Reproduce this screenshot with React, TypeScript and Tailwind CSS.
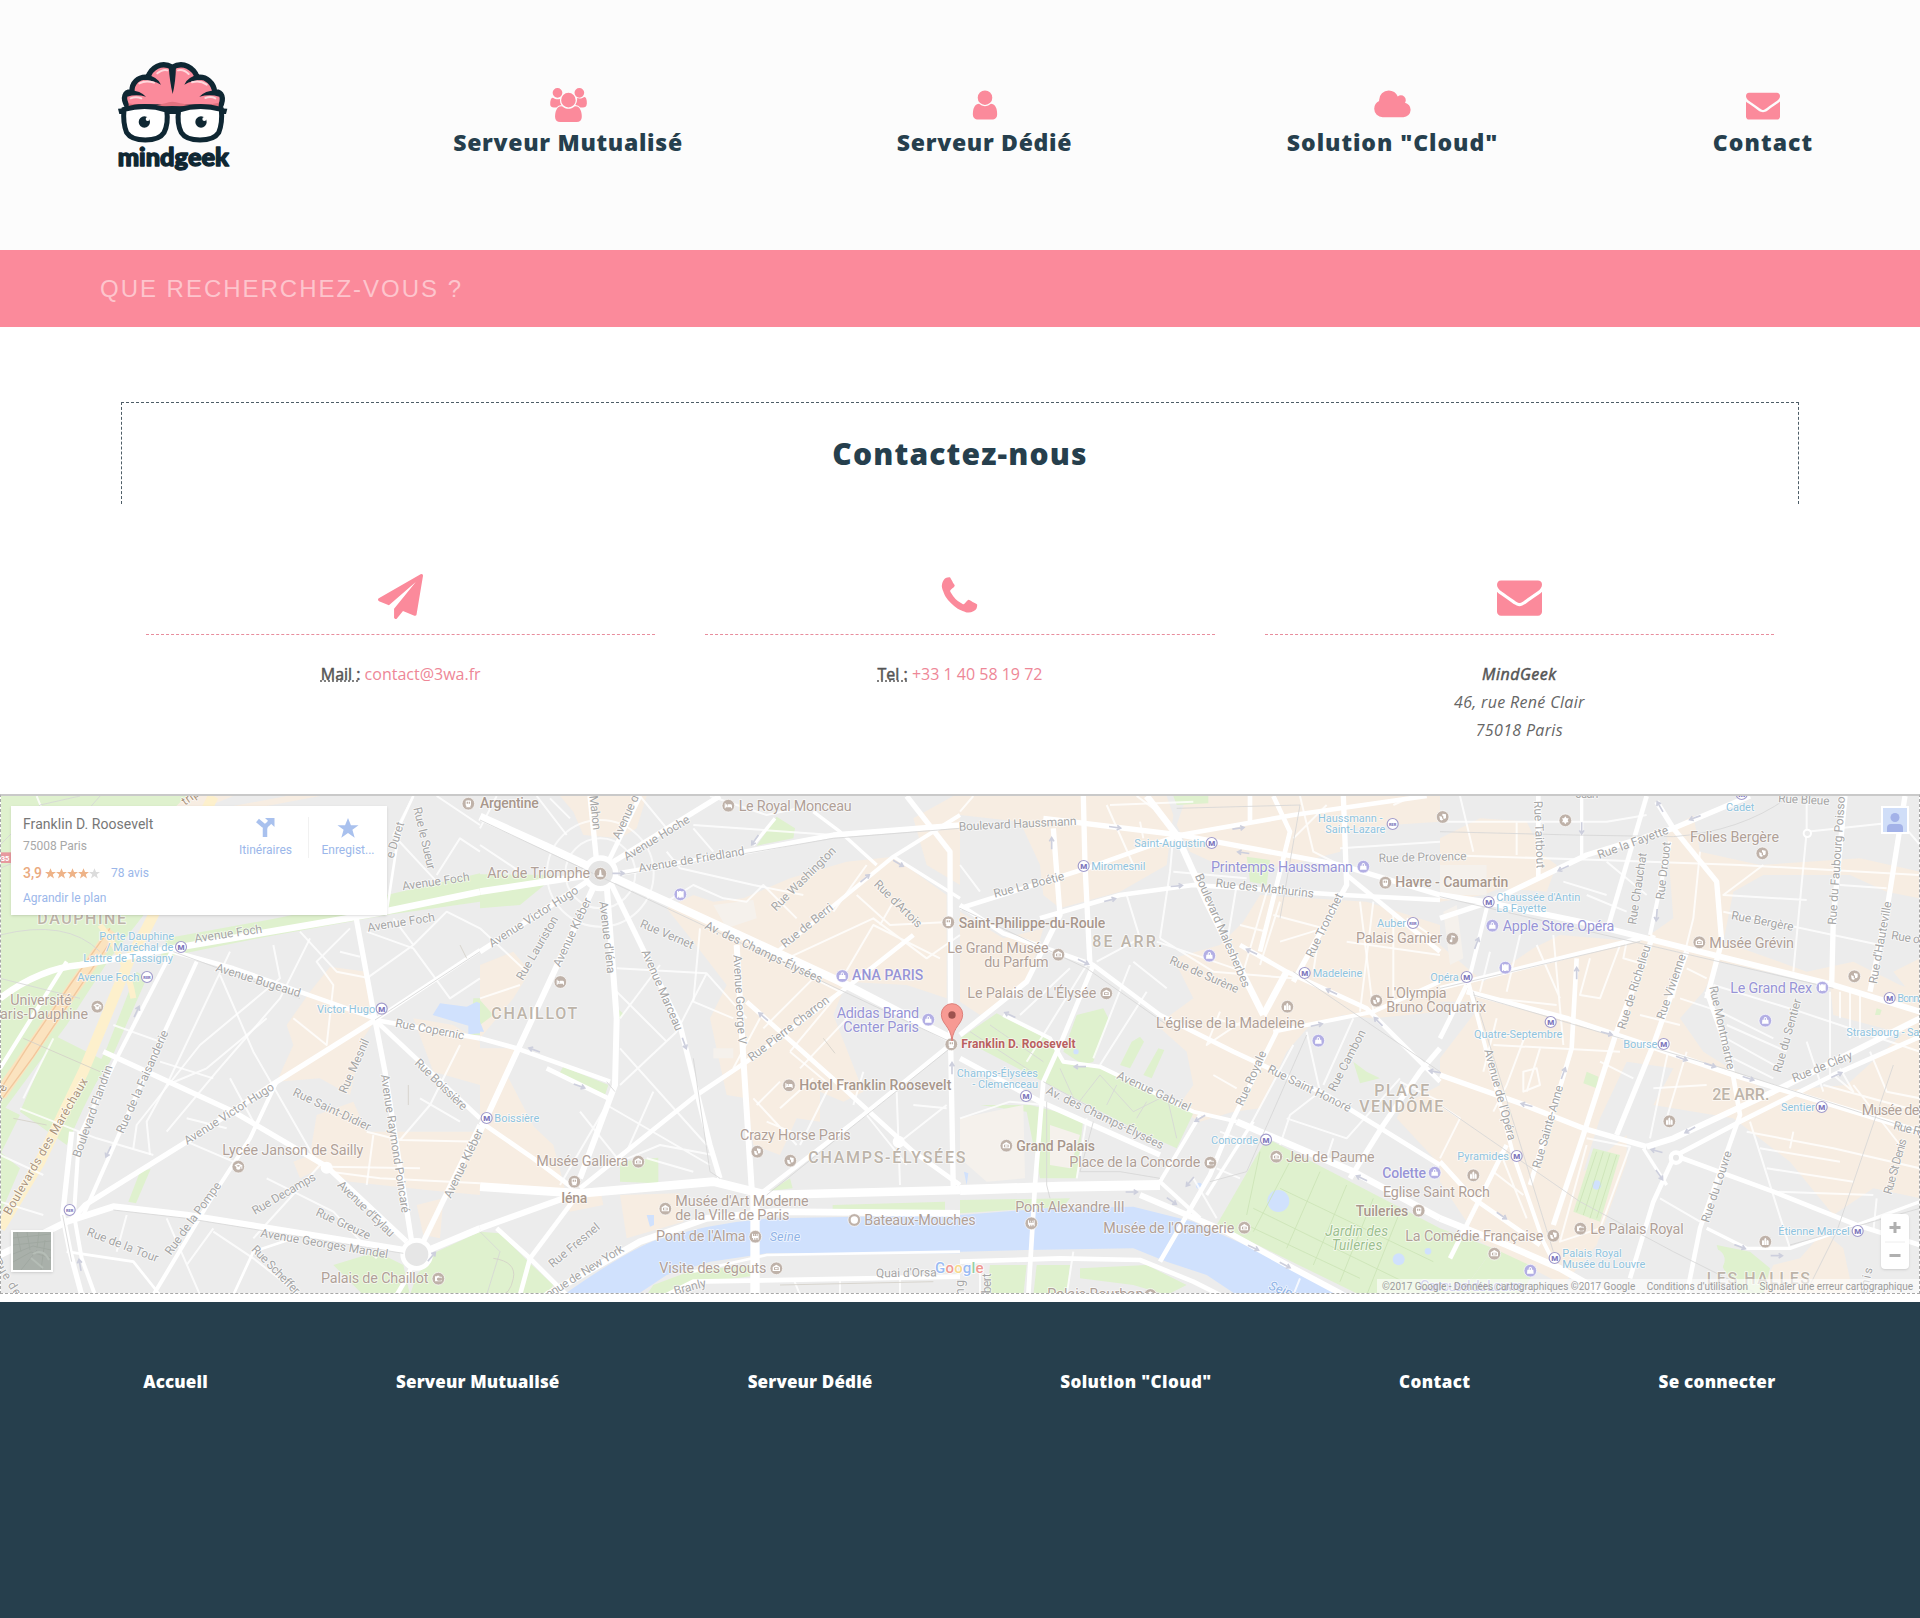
import React from "react";

type Label = [number, number, number, number, string];
type Pt = [number, number];

const TILE = 1440;

const ICONS = {
  users: "M657 896q-162 5-265 128h-134q-82 0-138-40.5t-56-118.5q0-353 124-353 6 0 43.5 21t97.5 42.5 119 21.5q67 0 133-23-5 37-5 66 0 159 93 297zm1071 637q0 120-73 189.5t-194 69.5h-874q-121 0-194-69.5t-73-189.5q0-53 3.5-103.5t14-109 26.5-108.5 43-97.5 62-81 85.5-53.5 111.5-20q10 0 43 21.5t73 48 107 48 135 21.5 135-21.5 107-48 73-48 43-21.5q61 0 111.5 20t85.5 53.5 62 81 43 97.5 26.5 108.5 14 109 3.5 103.5zm-1024-1277q0 106-75 181t-181 75-181-75-75-181 75-181 181-75 181 75 75 181zm704 384q0 159-112.5 271.5t-271.5 112.5-271.5-112.5-112.5-271.5 112.5-271.5 271.5-112.5 271.5 112.5 112.5 271.5zm576 225q0 78-56 118.5t-138 40.5h-134q-103-123-265-128 93-138 93-297 0-29-5-66 66 23 133 23 59 0 119-21.5t97.5-42.5 43.5-21q124 0 124 353zm-128-609q0 106-75 181t-181 75-181-75-75-181 75-181 181-75 181 75 75 181z",
  user: "M1536 1399q0 109-62.5 187t-150.5 78h-854q-88 0-150.5-78t-62.5-187q0-85 8.5-160.5t31.5-152 58.5-131 94-89 134.5-34.5q131 128 313 128t313-128q76 0 134.5 34.5t94 89 58.5 131 31.5 152 8.5 160.5zm-256-887q0 159-112.5 271.5t-271.5 112.5-271.5-112.5-112.5-271.5 112.5-271.5 271.5-112.5 271.5 112.5 112.5 271.5z",
  cloud: "M1984 1152q0 159-112.5 271.5t-271.5 112.5h-1088q-185 0-316.5-131.5t-131.5-316.5q0-132 71-241.5t187-163.5q-2-28-2-43 0-212 150-362t362-150q158 0 286.5 88t187.5 230q70-62 166-62 106 0 181 75t75 181q0 75-41 138 129 30 213 134.5t84 239.5z",
  envelope: "M1792 710v794q0 66-47 113t-113 47h-1472q-66 0-113-47t-47-113v-794q44 49 101 87 362 246 497 345 57 42 92.5 65.5t94.5 48 110 24.5h2q51 0 110-24.5t94.5-48 92.5-65.5q170-123 498-345 57-39 100-87zm0-294q0 79-49 151t-122 123q-376 261-468 325-10 7-42.5 31t-54 38.5-52 32.5-57.5 27-50 9h-2q-23 0-50-9t-57.5-27-52-32.5-54-38.5-42.5-31q-91-64-262-182.5t-205-142.5q-62-42-117-115.5t-55-136.5q0-78 41.5-130t118.5-52h1472q65 0 112.5 47t47.5 113z",
  plane: "M1764 11q33 24 27 64l-256 1536q-5 29-32 45-14 8-31 8-11 0-24-5l-453-185-242 295q-18 23-49 23-13 0-22-4-19-7-30.5-23.5t-11.5-36.5v-349l864-1059-1069 925-395-162q-37-14-40-55-2-40 32-59l1664-960q15-9 32-9 20 0 36 11z",
  phone: "M1600 1240q0 27-10 70.5t-21 68.5q-21 50-122 106-94 51-186 51-27 0-53-3.5t-57.5-12.5-47-14.5-55.5-20.5-49-18q-98-35-175-83-127-79-264-216t-216-264q-48-77-83-175-3-9-18-49t-20.5-55.5-14.5-47-12.5-57.5-3.5-53q0-92 51-186 56-101 106-122 25-11 68.5-21t70.5-10q14 0 21 3 18 6 53 76 11 19 30 54t35 63.5 31 53.5q3 4 17.5 25t21.5 35.5 7 28.5q0 20-28.5 50t-62 55-62 53-28.5 46q0 9 5 22.5t8.5 20.5 14 24 11.5 19q76 137 174 235t235 174q2 1 19 11.5t24 14 20.5 8.5 22.5 5q18 0 46-28.5t53-62 55-62 50-28.5q14 0 28.5 7t35.5 21.5 25 17.5q25 15 53.5 31t63.5 35 54 30q70 35 76 53 3 7 3 21z",
};

function Glyph({ d, wide, size }: { d: string; wide?: boolean; size: number }) {
  return (
    <svg
      viewBox={wide ? "0 0 2048 1792" : "0 0 1792 1792"}
      width={wide ? (size * 2048) / 1792 : size}
      height={size}
      fill="#fb8a9b"
    >
      <path d={d} />
    </svg>
  );
}

function Logo() {
  return (
    <svg viewBox="0 0 510 450" width="170" height="150">
      <path
        d="M112 200C96 172 104 154 126 156C124 130 144 108 174 112C182 84 214 62 247 82C280 62 312 84 322 112C350 108 372 130 374 156C396 154 404 174 390 202Z"
        fill="#fb8a9b"
        stroke="#0f2733"
        strokeWidth="16"
        strokeLinejoin="round"
      />
      <path d="M116 190Q180 204 226 190Q246 180 270 190Q330 202 386 188V206H116Z" fill="#e2727f" />
      <g fill="#0f2733">
        <path d="M236 78H258Q257 125 248 162Q239 125 236 78Z" />
        <path d="M170 106Q200 108 213 134Q188 120 160 120Z" />
        <path d="M324 106Q296 108 283 134Q308 120 336 120Z" />
        <path d="M114 152Q146 148 168 170Q138 162 112 170Z" />
        <path d="M384 152Q350 148 328 170Q360 162 388 170Z" />
      </g>
      <g fill="none" stroke="#ffd7dc" strokeWidth="6" strokeLinecap="round">
        <path d="M202 100Q220 86 232 91" />
        <path d="M264 91Q280 86 296 102" />
        <path d="M148 130Q168 120 192 128" />
        <path d="M306 127Q330 120 350 134" />
        <path d="M122 175Q138 168 154 175" />
        <path d="M346 174Q362 168 376 175" />
      </g>
      <path d="M84 206Q246 190 412 206L408 222H88Z" fill="#0f2733" />
      <g fill="#fff" stroke="#0f2733" strokeWidth="15">
        <path d="M102 208Q168 190 230 210Q236 250 222 278Q208 300 166 300Q124 300 110 278Q98 250 102 208Z" />
        <path d="M394 208Q328 190 266 210Q260 250 274 278Q288 300 330 300Q372 300 386 278Q398 250 394 208Z" />
      </g>
      <path d="M228 212Q248 198 268 212V226Q248 212 228 226Z" fill="#0f2733" />
      <g fill="#0f2733">
        <circle cx="163" cy="246" r="17" />
        <circle cx="333" cy="246" r="17" />
      </g>
      <circle cx="173" cy="237" r="6" fill="#fff" />
      <circle cx="343" cy="237" r="6" fill="#fff" />
      <text
        x="83"
        y="378"
        fontFamily="Lato, sans-serif"
        fontWeight="900"
        fontSize="74"
        textLength="334"
        lengthAdjust="spacingAndGlyphs"
        fill="#0f2733"
        stroke="#0f2733"
        strokeWidth="4"
        strokeLinejoin="round"
      >
        mindgeek
      </text>
    </svg>
  );
}

/* ---------- map data: one entry per 480px tile, 3 units per pixel ---------- */

const warm: string[][] = [
  [
    "M990 545L1100 560L1130 700L1090 760L1050 930L960 880L830 890L880 780L860 720L930 620Z",
    "M950 990L1060 950L1100 1040L1440 1040V1230L1280 1215L1050 1190L960 1150L900 1180L880 1130L930 1110Z",
    "M1240 700L1360 720L1440 770V900L1300 860Z",
    "M1250 1260L1330 1240L1320 1360L1270 1350Z",
    "M560 33H700L560 90L500 60Z",
    "M860 33L960 33L800 63H700Z",
  ],
  [
    "M240 33H500L470 130L420 160L310 150L280 80Z",
    "M560 370L640 330L700 350L790 340L930 280L1100 230L1240 215L1400 330V640L1280 600L1100 590L1060 690L1150 920L1090 950L1020 920L1020 1010L950 1000L900 1110L820 1080L800 940L740 930L690 700L740 600L640 470Z",
    "M0 540L100 500L150 560L100 640L0 760Z",
    "M0 790L110 790L60 930L220 1080L260 1230L0 1210Z",
    "M0 830H60L200 1100L230 1210H0Z",
    "M240 1215L360 1210L370 1260L270 1280Z",
    "M1300 100L1420 33H1440V300L1340 240Z",
    "M420 1230L600 1225L610 1310L440 1360Z",
  ],
  [
    "M0 33H620L640 90L620 240L480 320L300 370L250 330L240 240L180 110L0 90Z",
    "M680 33H1440V110L1290 120L1170 130L1140 200L990 240L820 260L690 200L650 120Z",
    "M0 380L130 460L250 430L200 600L60 690L0 650Z",
    "M640 520L780 480L850 410L900 330L1220 350L1440 420V680L1240 700L1150 690L1050 720L980 800L900 970L820 980L720 1010L650 970L700 900L680 800L590 720L700 640Z",
    "M1330 960L1440 900V1140L1310 1000Z",
  ],
  [
    "M0 160L120 100L260 110L310 210L350 240L320 320L180 310L130 330L0 350Z",
    "M680 140L760 90L780 200L960 240L1260 220L1440 260V340L1340 320L1230 270L970 270L880 320L850 470L1100 560L1240 530L1380 600L1440 620V760L1180 690L1170 600L840 530L790 620L720 700L790 800L980 920L1220 900L1440 700V1240L1300 1210L1180 1290L1050 1130L880 1000L640 960L700 850L560 830L480 1000L430 1160L560 1050L560 1130L470 1380L370 1500L120 1370L0 1190V820L130 650L0 650V480L130 590L280 490L360 450L600 470L700 400Z",
    "M1080 1420L1150 1340L1210 1390L1240 1530H960L1000 1440Z",
    "M1360 560L1440 520V660Z",
  ],
];

const green: string[][] = [
  [
    "M0 33H560L480 110L470 340L330 520L200 720L0 990Z",
    "M500 460L830 400L1160 330L1440 265V350L1160 390L800 455L480 520Z",
    "M160 750L320 830L250 970L200 1080L60 980Z",
    "M410 560L440 580L330 830L190 1040L210 1010L320 790Z",
    "M0 960L60 990L0 1110Z",
    "M0 1100L60 1150L0 1290Z",
    "M420 1160L452 1152L408 1255L385 1250Z",
    "M1000 1440L1130 1400L1210 1440L1230 1530H1090Z",
    "M1310 1400L1440 1340V1530H1230L1250 1470Z",
    "M1420 640H1440V750H1410Z",
  ],
  [
    "M0 268L230 270L120 360L0 370Z",
    "M0 645L40 690L0 720Z",
    "M890 95L945 130L940 160L830 182Z",
    "M250 845L385 900L375 930L235 870Z",
    "M412 670L432 688L415 705Z",
    "M420 1130L535 1118V1195L420 1190Z",
    "M930 1180L938 1210L870 1218Z",
    "M0 1340L60 1345L145 1430L220 1500L200 1530H0Z",
    "M1058 1260L1395 1250V1278L1058 1282Z",
    "M520 1500L640 1455L840 1440V1470L620 1500L560 1530H500Z",
  ],
  [
    "M0 760L110 685L280 770L310 830L420 850L700 985L650 1090L540 1040L250 890Z",
    "M350 690L430 670L445 700L400 830L370 840L310 800Z",
    "M540 755L552 770L510 850L480 840L515 770Z",
    "M595 790L613 795L575 880L550 870Z",
    "M640 33H745V55L650 60Z",
    "M860 215L930 225L920 300L870 290Z",
    "M1180 830L1220 860L1260 880L1200 895Z",
    "M60 960L210 960L370 1000L350 1180H240L200 980Z",
    "M0 1245L330 1240L310 1265L0 1285Z",
    "M920 1060L1440 1330V1530L1200 1530L770 1320Z",
    "M90 1440H200L190 1530H80Z",
    "M230 1440H330L320 1530H220Z",
    "M360 1450L560 1440L680 1500L620 1530L520 1500L360 1480Z",
  ],
  [
    "M440 860L475 875L470 910L430 895Z",
    "M460 1090L540 1110L480 1310L400 1280Z",
    "M0 1330L160 1390L60 1530H0Z",
    "M160 1390L290 1450L240 1530H60Z",
    "M830 1380L930 1400L990 1450L970 1530H900L850 1450Z",
    "M1310 670L1325 675L1320 690H1305Z",
  ],
];

const water: string[][] = [
  ["M1298 690L1320 655L1400 665L1430 650L1440 655V745L1405 748V722Z"],
  [
    "M250 1530Q420 1410 520 1368Q700 1310 880 1300L1440 1290V1405L860 1405L690 1430L560 1470L470 1530Z",
    "M500 1290L522 1290V1320L510 1325Z",
    "M0 710L12 740H0Z",
  ],
  [
    "M0 1290L260 1270L520 1265L700 1310L900 1400L1170 1530L830 1530L740 1470L620 1430L520 1390L200 1395L0 1400Z",
    "M922 1248A33 33 0 1 0 988 1248A33 33 0 1 0 922 1248Z",
    "M1298 1423A18 18 0 1 0 1334 1423A18 18 0 1 0 1298 1423Z",
    "M340 800A8 8 0 1 0 356 800A8 8 0 1 0 340 800Z",
    "M708 1202A9 9 0 1 0 726 1202A9 9 0 1 0 708 1202Z",
    "M1394 1399A10 10 0 1 0 1414 1399A10 10 0 1 0 1394 1399Z",
    "M12 1160L25 1165L20 1200Z",
  ],
  ["M456 1200A14 14 0 1 0 484 1200A14 14 0 1 0 456 1200Z"],
];

/* width, path */
const roads: [number, string][][] = [
  [
    [20, "M0 640Q120 550 240 540L520 490L1130 385L1440 320"],
    [16, "M1065 380L1125 705L1155 860L1235 1370L1250 1410"],
    [16, "M1125 705L830 890L560 1070L255 1260L210 1310"],
    [14, "M520 500L700 550L1125 700"],
    [14, "M1125 705L1440 1000"],
    [14, "M1125 705L1440 760"],
    [12, "M1125 705L1440 495"],
    [16, "M310 800L700 980L980 1145L1220 1370"],
    [12, "M830 890L750 1060L640 1230L460 1530"],
    [20, "M0 1410L200 1310L340 1265L560 1290L1210 1395"],
    [16, "M215 1040L188 1290L210 1400L245 1530"],
    [12, "M238 1040L222 1290L245 1420L285 1530"],
    [12, "M590 530L480 770L250 1290"],
    [12, "M520 490L350 820L240 1050"],
    [20, "M1250 1410L1440 1330"],
    [16, "M1265 1380L1440 1020"],
    [14, "M1250 1410L1220 1480L1190 1530"],
    [6, "M690 500L500 900L440 1010L450 1110"],
    [6, "M820 480L840 580L600 780L410 1020L400 1090"],
    [6, "M930 460L840 640L650 860L500 1040"],
    [6, "M660 570L760 800L950 1130"],
    [6, "M480 770L340 720M480 830L640 880M500 900L620 850L800 700"],
    [6, "M900 440L1010 560L1110 580M880 700L980 780L1000 600L950 530L1050 430"],
    [6, "M1020 500L1080 515M1100 440L1240 490L1350 640L1440 580M1240 480L1340 380L1440 430M1240 480L1100 580M1240 480L1180 400"],
    [6, "M990 1160L1140 1180L1440 1195M1100 1040L1200 1065L1440 1070M1200 1065L1290 960L1380 780M1260 940L1380 1010"],
    [6, "M60 970L290 1060L460 1110M70 940L160 760M0 1110L130 1170M0 1250L130 1290"],
    [6, "M690 880L760 1010M640 1330L560 1440M640 1340L760 1420L900 1530M380 1290L350 1400M500 1300L600 1530"],
    [6, "M800 1180L1000 1280L1130 1420M960 1140L760 1360M1120 1050L1100 1200"],
    [6, "M110 33L125 70M1240 33L1180 150L1310 290M1310 33L1440 120M1310 270L1380 160L1440 200"],
    [8, "M1160 380L1200 120L1240 33"],
    [12, "M200 530L0 850"],
    [6, "M680 1030L560 1000M560 1070L700 1130M980 1145L1260 1150"],
    [8, "M700 1530L760 1400L880 1360M200 1400L400 1430L480 1530"],
  ],
  [
    [24, "M0 95L200 185L360 260L560 350L800 460L1080 590L1410 760"],
    [20, "M360 265L0 320"],
    [16, "M360 265L0 500"],
    [18, "M360 265L120 780L0 1040"],
    [18, "M380 300L410 700L405 900L300 1180"],
    [16, "M395 300L600 720L690 1080L720 1180"],
    [16, "M350 230L330 33"],
    [14, "M385 230L480 33"],
    [16, "M400 230L720 33"],
    [16, "M420 265L800 200L1060 150L1440 120"],
    [18, "M770 480L790 820L815 1210"],
    [14, "M300 1210L650 930L800 830L1110 600L1300 450"],
    [14, "M800 650L1080 900L1300 1100L1440 1200"],
    [14, "M1410 780L1150 990L850 1220"],
    [12, "M880 510L1240 215L1440 90"],
    [16, "M1280 33L1410 200L1412 780L1420 1220"],
    [14, "M0 760L110 790L390 890"],
    [14, "M200 850L395 945"],
    [26, "M0 1205L300 1225L700 1190L860 1230L1440 1215"],
    [18, "M0 1330L250 1240"],
    [14, "M300 1220L150 1420L120 1530"],
    [14, "M50 1330L150 1420L260 1530"],
    [20, "M200 1530L480 1370L680 1300L880 1280L1440 1285"],
    [28, "M825 1220V1530"],
    [14, "M560 1530L640 1490L1440 1475"],
    [8, "M640 1460L860 1410L1440 1400"],
    [14, "M0 1010L160 1120L280 1210"],
    [10, "M885 100L820 180M1240 215L1440 340M1000 80L1080 140L1190 240"],
    [6, "M640 120L1060 150M560 200L600 250L820 300L970 330M700 200L640 130"],
    [6, "M410 550L680 565L800 700M410 620L560 770M540 540L420 700M590 740L420 900M680 565L590 740M420 790L680 1080"],
    [6, "M840 700L760 850M850 730L1020 560M930 800L1080 620L880 520M960 850L1130 670M900 890L830 960"],
    [6, "M900 970L1000 880M860 1010L980 1060M960 1080L1050 900L930 800M820 940L950 1080M1250 920L1260 1200M1120 960L1150 860"],
    [6, "M380 960L240 1200M380 960L690 1140M520 920L440 1100M300 980L420 1130L540 1080L700 1110M500 1120L640 1160"],
    [6, "M1080 590L1180 420L1380 520M900 530L1180 400L1340 520L1440 450M1130 330L1230 420L1420 410M1160 240L1060 380M1200 420L1240 350"],
    [6, "M0 180L120 260M50 33L0 130M170 33L260 150M210 40L270 100M0 640L120 600M0 430L140 560"],
    [6, "M560 350L640 300L730 340L800 350L850 300L950 400M690 33L860 90L1000 60M660 430L640 650L760 700"],
    [6, "M480 33L560 130M1300 960L1400 970M1260 1070L1400 960M1160 990L1280 1140"],
    [6, "M940 1480L960 1530M1080 1480V1530M1260 1480V1530"],
  ],
  [
    [14, "M0 360L130 445L400 540L600 690L820 800L1100 930L1440 1140"],
    [20, "M560 33L650 150L740 350L910 690"],
    [16, "M370 33L375 240L390 540"],
    [16, "M280 130L300 390L200 590L0 750"],
    [14, "M0 370L380 250L660 150L1000 90L1400 33"],
    [16, "M250 100L660 150L1140 240L1440 330"],
    [14, "M240 400L480 330L700 300L1150 330L1440 345"],
    [14, "M870 33V110M940 33L990 140L900 500"],
    [16, "M1150 33L1160 300L1000 590"],
    [14, "M1160 270L1440 500"],
    [14, "M840 480L980 560L1220 670L1440 890"],
    [12, "M940 740L1240 680L1440 590"],
    [20, "M910 690L980 560"],
    [14, "M950 740L820 1000L750 1170L600 1430"],
    [16, "M0 820L240 950L600 1110"],
    [14, "M400 540L300 780L250 890L225 1200L205 1530"],
    [12, "M130 690L270 760L310 830L420 845L700 980L830 1010"],
    [20, "M830 1010L1180 1160L1440 1300"],
    [12, "M720 990L600 1190L720 1300"],
    [30, "M0 1215L300 1205L600 1200"],
    [18, "M540 1230L800 1340L1000 1450L1150 1530"],
    [14, "M0 1430L300 1420L540 1425L700 1490L780 1530"],
    [16, "M1440 790L1380 860L1270 1020L1170 1180"],
    [10, "M740 1230L860 1040L880 1010"],
    [6, "M0 240L60 320M40 33L0 80M530 33L620 100M540 110L550 160M640 150L630 260L600 460M500 330L540 460L410 530"],
    [6, "M450 60L700 50M640 260L860 280M600 460L760 560L1000 580M520 530L620 610M590 470L850 560M520 240L440 60"],
    [6, "M830 300L800 480M920 320L850 560M960 350L900 540M940 390L1090 430L960 470M920 440L840 420M1080 430L1060 560"],
    [6, "M510 540L400 820M380 540L200 830M330 550L180 690M560 620L420 840M760 700L840 720M780 680L740 780L860 700M1200 350L1240 680"],
    [6, "M1240 350L1200 680M1300 380V680M1160 470L1440 510M1340 400L1440 470"],
    [6, "M1000 780L850 1060M1040 740L1080 920L990 990L960 1080M980 1000L1160 1060L1320 880M760 870L830 910M1090 900L1180 700M1120 1060L1100 1120M1320 890L1440 950"],
    [6, "M780 1040L880 1080M770 1150L840 1180M700 1180L770 1300"],
    [6, "M1020 33L1060 200L1140 240M1100 60L1000 160M1140 190L1440 170M1300 60L1360 33"],
    [6, "M380 1000L350 1180M0 1000L150 950L250 960M60 1440V1530M340 1400L320 1530M1000 1530L1020 1480"],
  ],
  [
    [18, "M0 330L130 350L420 410L620 460L900 530L1180 600L1440 680"],
    [14, "M0 610L200 560L600 460"],
    [16, "M0 400L150 350L440 210L700 130L930 33"],
    [16, "M650 50L700 130L830 290L845 470L800 640"],
    [14, "M620 33L500 440"],
    [12, "M690 170L630 450"],
    [10, "M425 33V220"],
    [14, "M295 33V280"],
    [16, "M1215 33L1180 400L1175 600"],
    [16, "M1395 33L1340 380L1290 620"],
    [16, "M640 450L530 740L430 1050L340 1320"],
    [16, "M740 500L640 780L530 1050"],
    [12, "M145 350L85 590L220 1110L310 1370L340 1430"],
    [16, "M80 620L380 700L620 780L880 870L1080 930L1440 1040"],
    [16, "M0 870L240 955L430 1030L620 1085"],
    [14, "M410 520L395 790L350 940L270 1200"],
    [14, "M800 620L870 820L900 990L780 1330L740 1530"],
    [18, "M620 1085L700 1060L1000 920L1440 700"],
    [14, "M710 1110L900 1010L1180 870L1440 755"],
    [14, "M700 1110L1000 1220L1250 1320L1440 1380"],
    [14, "M700 1120L640 1250L570 1480"],
    [10, "M610 1090L680 1200"],
    [14, "M0 1130L100 1240L300 1380"],
    [14, "M200 1080L120 1240L30 1420"],
    [20, "M0 1300L200 1380L360 1450L500 1530"],
    [14, "M80 600L0 760"],
    [10, "M800 1330L920 1390L1050 1390L1250 1320L1440 1250"],
    [6, "M0 110H500L620 90M0 210L480 225L900 240L1440 270M230 110V210M370 290L500 330M500 230L620 330"],
    [6, "M780 200L760 400L700 640M970 240L850 330L1100 345M1100 33V140L1080 350L1060 560M1200 300L1340 310M850 380L1320 480M1100 140L1380 110L1440 180"],
    [6, "M440 330L560 380M100 200L60 33M150 500L120 620M240 450L200 620M340 450L370 780M290 480L360 640M450 520L420 630L480 640L540 480M560 470L550 520L620 540"],
    [6, "M160 640L350 660M160 780L540 800M170 700L130 860M260 740L200 900L160 980M300 790L260 920M250 860L290 850L300 900L250 920Z"],
    [6, "M480 830L580 880M600 690L720 720M690 770L630 1060M740 800L680 1000M720 640L840 680L1000 760M820 600L1080 680L1440 800M740 550L800 580"],
    [6, "M860 720L1040 800M840 750L1020 850M880 820L1000 880M640 910L800 900M1100 770L1150 920M1170 620V880M1200 620V700M1230 620V760M1260 620V760"],
    [6, "M930 1010L1050 1390M920 1040L1180 1090L1440 1150M960 1090L1200 1130M980 1150L1240 1190M1000 1220L1300 1230M1240 900L1380 1080M1150 900L1440 980M1290 800L1340 920L1440 940M1060 1040L1050 1090"],
    [6, "M660 1240L780 1310M0 960L60 1000L0 1120M160 1160L250 1230M180 1100L260 1300M1310 1240L1300 1340M1180 870L1240 920L1200 850"],
    [6, "M440 1060L570 1085L480 1330L360 1370L440 1080"],
  ],
];

/* thin grey outlines: railways, tunnels, park paths */
const thin: string[][] = [
  ["M1125 705L1440 500M340 1275L560 1300L1210 1405M188 1290L215 1430M0 250Q180 180 300 33M0 180L120 60L240 33M0 450Q200 400 300 500M0 580L240 640M520 500L900 640", "M70 760L300 860M40 1000L140 1020M1380 480L1400 520M1225 900V960"],
  ["M0 105L360 275L1410 770M420 270L1060 160L1440 130M1410 790L860 1230M640 820L690 1160L720 1180M380 890L405 920M20 1530L60 1400L0 1340", "M40 1420Q110 1430 100 1480T60 1530M1030 760L1065 805M900 1500L1360 1490"],
  ["M0 370L380 550L650 740M650 70L1020 60L960 400M1000 560L1440 860M1040 750L860 1160L750 1190M250 890L600 1080M90 720L250 830M30 740L230 870M300 850L350 960L420 870L520 980L620 930L650 1060M470 900L440 960M560 950L530 1000M400 1010L360 1160L480 1160L600 1180M260 950V1200L270 1240", "M900 1100L860 1290M1000 1110L880 1340M1080 1160L980 1390M1160 1200L1060 1440M1240 1240L1140 1490M1320 1280L1220 1530M960 1210L1420 1430M880 1270L1330 1490M860 1320L1200 1480"],
  ["M0 140L400 150L700 155Q900 140 1040 40M0 960L420 1250L700 1400L940 1520M0 610L600 470M100 630L850 850L1440 1040M1360 840L1190 1340L1100 1520M100 620L340 1400M0 335L1180 610M1440 1270L1050 1380", "M470 1100L410 1280M490 1100L430 1290M510 1105L450 1300M530 1110L470 1300"],
];

const streets: Label[][] = [
  [
    [585, 473, 788, 443, "Avenue Foch"], [1104, 440, 1306, 408, "Avenue Foch"], [1208, 316, 1410, 287, "Avenue Foch"],
    [645, 558, 898, 637, "Avenue Bugeaud"], [562, 1080, 825, 912, "Avenue Victor Hugo"], [370, 1048, 506, 742, "Rue de la Faisanderie"],
    [1038, 928, 1108, 768, "Rue Mesnil"], [1184, 725, 1390, 764, "Rue Copernic"], [1242, 836, 1388, 978, "Rue Boissière"],
    [1142, 870, 1205, 1285, "Avenue Raymond Poincaré"], [876, 930, 1105, 1038, "Rue Saint-Didier"], [240, 1120, 338, 845, "Boulevard Flandrin"],
    [765, 1290, 950, 1183, "Rue Decamps"], [1010, 1202, 1170, 1358, "Avenue d'Eylau"], [945, 1290, 1105, 1364, "Rue Greuze"],
    [512, 1412, 665, 1202, "Rue de la Pompe"], [780, 1355, 1162, 1420, "Avenue Georges Mandel"], [752, 1395, 885, 1530, "Rue Scheffer"],
    [258, 1350, 470, 1432, "Rue de la Tour"], [1352, 1242, 1450, 1040, "Avenue Kléber"], [1240, 70, 1283, 255, "Rue le Sueur"],
    [1180, 222, 1213, 115, "e Duret"], [-20, 1430, 45, 1535, "Rue de"],
  ],
  [
    [440, 228, 632, 110, "Avenue Hoche"], [478, 262, 795, 210, "Avenue de Friedland"], [418, 165, 485, 20, "Avenue de"],
    [328, 33, 340, 136, "Mahon"], [36, 488, 298, 322, "Avenue Victor Hugo"], [128, 588, 236, 402, "Rue Lauriston"],
    [240, 548, 335, 345, "Avenue Kléber"], [358, 350, 382, 566, "Avenue d'Iéna"], [484, 500, 588, 740, "Avenue Marceau"],
    [478, 425, 635, 492, "Rue Vernet"], [672, 430, 1020, 595, "Av. des Champs-Élysées"], [760, 510, 775, 778, "Avenue George V"],
    [888, 380, 1070, 200, "Rue Washington"], [915, 490, 1062, 372, "Rue de Berri"], [1180, 300, 1312, 430, "Rue d'Artois"],
    [815, 830, 1050, 650, "Rue Pierre Charron"], [218, 1450, 362, 1330, "Rue Fresnel"], [175, 1560, 434, 1398, "Avenue de New York"],
    [585, 1530, 680, 1505, "Branly"], [1188, 1477, 1370, 1474, "Quai d'Orsa"], [1437, 137, 1790, 120, "Boulevard Haussmann"],
  ],
  [
    [104, 338, 315, 284, "Rue La Boétie"], [766, 305, 1060, 338, "Rue des Mathurins"], [704, 272, 850, 610, "Boulevard Malesherbes"],
    [626, 535, 830, 625, "Rue de Surène"], [1058, 520, 1150, 332, "Rue Tronchet"], [1256, 232, 1520, 225, "Rue de Provence"],
    [468, 880, 685, 980, "Avenue Gabriel"], [256, 925, 604, 1093, "Av. des Champs-Élysées"], [848, 965, 920, 804, "Rue Royale"],
    [920, 860, 1166, 982, "Rue Saint Honoré"], [1125, 922, 1218, 742, "Rue Cambon"], [92, 1525, 92, 1465, "bert"], [12, 1530, 12, 1485, "ng"],
  ],
  [
    [282, 48, 290, 250, "Rue Taitbout"], [478, 222, 688, 145, "Rue la Fayette"], [588, 420, 620, 205, "Rue Chauchat"],
    [672, 345, 692, 172, "Rue Drouot"], [1014, 52, 1168, 60, "Rue Bleue"], [1188, 420, 1215, 35, "Rue du Faubourg Poisso"],
    [872, 402, 1058, 438, "Rue Bergère"], [1310, 598, 1355, 352, "Rue d'Hauteville"], [555, 735, 632, 485, "Rue de Richelieu"],
    [672, 706, 738, 512, "Rue Vivienne"], [808, 606, 862, 855, "Rue Montmartre"], [1022, 865, 1084, 645, "Rue du Sentier"],
    [1062, 892, 1240, 820, "Rue de Cléry"], [132, 796, 205, 1068, "Avenue de l'Opéra"], [300, 1152, 370, 905, "Rue Sainte-Anne"],
    [806, 1315, 876, 1102, "Rue du Louvre"], [1354, 1230, 1400, 1065, "Rue St Denis"], [1352, 462, 1438, 476, "Rue o"],
    [1358, 1032, 1438, 1052, "Rue R"], [405, 38, 475, 38, "ouan"], [1280, 1530, 1298, 1450, "enis"],
  ],
];

const metroText: Label[][] = [
  [
    [298, 465, 522, 465, "Porte Dauphine"], [318, 497, 520, 497, "/ Maréchal de"], [250, 530, 519, 530, "Lattre de Tassigny"],
    [232, 587, 418, 587, "Avenue Foch"], [951, 683, 1126, 683, "Victor Hugo"],
  ],
  [[43, 1010, 178, 1010, "Boissière"], [1430, 876, 1674, 876, "Champs-Élysées"], [1477, 909, 1674, 909, "- Clemenceau"]],
  [
    [523, 185, 736, 185, "Saint-Augustin"], [394, 255, 556, 255, "Miromesnil"], [1074, 111, 1268, 111, "Haussmann -"], [1096, 144, 1276, 144, "Saint-Lazare"],
    [1251, 425, 1338, 425, "Auber"], [1058, 575, 1207, 575, "Madeleine"], [753, 1077, 894, 1077, "Concorde"], [1411, 588, 1496, 588, "Opéra"],
  ],
  [
    [858, 77, 943, 77, "Cadet"], [169, 348, 421, 348, "Chaussée d'Antin"], [169, 381, 319, 381, "La Fayette"], [102, 759, 367, 759, "Quatre-Septembre"],
    [550, 788, 652, 788, "Bourse"], [1372, 650, 1438, 650, "Bonn"], [1219, 753, 1438, 753, "Strasbourg - Sa"], [1023, 977, 1125, 977, "Sentier"],
    [52, 1124, 207, 1124, "Pyramides"], [1015, 1349, 1229, 1349, "Étienne Marcel"], [367, 1416, 545, 1416, "Palais Royal"], [367, 1448, 616, 1448, "Musée du Louvre"],
  ],
];

const poiText: Label[][] = [
  [
    [31, 660, 215, 660, "Université"], [0, 703, 264, 703, "aris-Dauphine"], [667, 1110, 1090, 1110, "Lycée Janson de Sailly"], [963, 1494, 1285, 1494, "Palais de Chaillot"],
  ],
  [
    [776, 79, 1115, 79, "Le Royal Monceau"], [22, 279, 330, 279, "Arc de Triomphe"], [780, 1065, 1112, 1065, "Crazy Horse Paris"], [169, 1143, 445, 1143, "Musée Galliera"],
    [586, 1263, 986, 1263, "Musée d'Art Moderne"], [586, 1305, 928, 1305, "de la Ville de Paris"], [528, 1368, 797, 1368, "Pont de l'Alma"],
    [538, 1464, 859, 1464, "Visite des égouts"], [1153, 1320, 1487, 1320, "Bateaux-Mouches"], [1402, 504, 1706, 504, "Le Grand Musée"],
  ],
  [
    [73, 546, 266, 546, "du Parfum"], [22, 639, 409, 639, "Le Palais de L'Élysée"], [588, 729, 1034, 729, "L'église de la Madeleine"], [1188, 474, 1446, 474, "Palais Garnier"],
    [1279, 639, 1460, 639, "L'Olympia"], [1279, 681, 1578, 681, "Bruno Coquatrix"], [328, 1146, 721, 1146, "Place de la Concorde"], [166, 1281, 494, 1281, "Pont Alexandre III"],
    [430, 1344, 823, 1344, "Musée de l'Orangerie"], [1269, 1236, 1590, 1236, "Eglise Saint Roch"], [1336, 1368, 1750, 1368, "La Comédie Française"], [262, 1543, 550, 1543, "Palais Bourbon"],
    [979, 1130, 1244, 1130, "Jeu de Paume"],
  ],
  [[750, 171, 1017, 171, "Folies Bergère"], [808, 488, 1062, 488, "Musée Grévin"], [1265, 989, 1438, 989, "Musée de"], [451, 1346, 731, 1346, "Le Palais Royal"]],
];

const stationText: Label[][] = [
  [],
  [[0, 69, 176, 69, "Argentine"], [958, 914, 1414, 914, "Hotel Franklin Roosevelt"], [244, 1254, 322, 1254, "Iéna"], [1436, 429, 1876, 429, "Saint-Philippe-du-Roule"]],
  [[169, 1098, 405, 1098, "Grand Palais"], [1187, 1293, 1345, 1293, "Tuileries"], [1306, 306, 1645, 306, "Havre - Caumartin"]],
  [],
];

const shopText: Label[][] = [
  [],
  [[1116, 585, 1330, 585, "ANA PARIS"]],
  [[1267, 1179, 1398, 1179, "Colette"]],
  [],
];

const shopTextThin: Label[][] = [
  [],
  [[1070, 699, 1317, 699, "Adidas Brand"], [1090, 741, 1317, 741, "Center Paris"]],
  [[753, 261, 1179, 261, "Printemps Haussmann"]],
  [[188, 438, 523, 438, "Apple Store Opéra"], [871, 624, 1116, 624, "Le Grand Rex"], [-60, 1519, 250, 1519, "Carrousel du Louvre"]],
];

const districtText: Label[][] = [
  [[112, 416, 378, 416, "DAUPHINE"]],
  [[34, 701, 292, 701, "CHAILLOT"], [985, 1133, 1456, 1133, "CHAMPS-ÉLYSÉES"]],
  [[397, 486, 607, 486, "8E ARR."], [1243, 932, 1408, 932, "PLACE"], [1198, 980, 1450, 980, "VENDÔME"]],
  [[817, 944, 988, 944, "2E ARR."], [800, 1498, 1110, 1498, "LES HALLES"]],
];

const metroPins: Pt[][] = [
  [[543, 486], [1145, 671]],
  [[20, 999]],
  [[371, 243], [755, 174], [1034, 564], [918, 1064], [198, 933]],
  [[146, 351], [80, 576], [332, 711], [671, 777], [1349, 639], [1145, 966], [230, 1113], [1253, 1338], [344, 1419], [905, 27]],
];
const rerPins: Pt[][] = [[[441, 576], [209, 1275]], [], [[1298, 117], [1359, 414]], []];

type Kind = "school" | "bed" | "museum" | "train" | "mask" | "camera" | "bridge" | "ring" | "bag" | "film" | "tower" | "church" | "music" | "star";
const pins: [number, number, Kind][][] = [
  [[292, 665, "school"], [715, 1145, "school"], [1315, 1481, "camera"], [1405, 56, "train"]],
  [
    [745, 62, "bed"], [361, 266, "tower"], [241, 591, "bed"], [927, 901, "bed"], [601, 328, "film"], [1087, 573, "bag"], [1345, 704, "bag"], [1405, 412, "train"],
    [1414, 778, "train"], [832, 1100, "mask"], [931, 1127, "mask"], [475, 1130, "museum"], [283, 1190, "train"], [556, 1271, "museum"], [826, 1355, "bridge"],
    [889, 1450, "museum"], [1123, 1305, "ring"],
  ],
  [
    [295, 509, "museum"], [439, 625, "museum"], [748, 512, "bag"], [982, 665, "church"], [1075, 767, "bag"], [1210, 245, "bag"], [1276, 293, "train"],
    [1249, 647, "mask"], [139, 1082, "museum"], [751, 1133, "camera"], [949, 1115, "museum"], [1424, 1163, "bag"], [1376, 1277, "train"], [853, 1328, "museum"],
    [214, 1315, "bridge"], [571, 1530, "museum"], [1448, 96, "mask"],
  ],
  [
    [376, 106, "star"], [967, 205, "mask"], [157, 422, "bag"], [37, 461, "music"], [196, 548, "film"], [778, 472, "museum"], [1147, 608, "film"], [1243, 574, "mask"],
    [976, 707, "bag"], [688, 1009, "church"], [100, 1171, "church"], [340, 1352, "mask"], [163, 1406, "museum"], [271, 1457, "bag"], [421, 1331, "camera"], [976, 1370, "church"],
  ],
];

/* one-way arrows: x, y, angle */
const arrows: [number, number, number][][] = [
  [[410, 680, -65], [325, 1100, 115], [1295, 1415, -50], [240, 1440, -100]],
  [[415, 265, 0], [1255, 235, 30], [1155, 280, -40], [850, 695, -140], [613, 775, 70], [163, 795, 200], [298, 903, 20], [1416, 850, -90], [825, 165, 125]],
  [[465, 127, 8], [835, 130, -8], [275, 175, -90], [450, 345, -14], [650, 303, -5], [850, 203, 188], [370, 530, 25], [875, 500, 205], [1115, 620, 205], [150, 690, 205], [360, 845, 180], [1070, 720, -12], [1255, 710, 225], [1425, 860, 190], [720, 1000, 150], [690, 1190, 130], [515, 1221, 0], [635, 1248, 35], [880, 1388, 25], [975, 1440, 28], [1205, 1180, 205]],
  [[660, 65, -120], [425, 130, 90], [765, 98, 160], [370, 250, 155], [110, 475, -70], [650, 390, 95], [410, 565, -90], [500, 745, 15], [370, 865, -70], [725, 820, 20], [810, 840, 18], [925, 880, 18], [1190, 870, -25], [260, 960, 195], [750, 1035, 150], [650, 1098, 195], [658, 1170, 55], [185, 1292, 35], [900, 1385, 20], [1010, 1412, 0]],
];

function Lines({ data, size, color, weight, italic }: { data: Label[][]; size: number; color: string; weight?: number; italic?: boolean }) {
  return (
    <g
      fontSize={size}
      fill={color}
      fontWeight={weight ?? 400}
      fontStyle={italic ? "italic" : "normal"}
      stroke="#ffffff"
      strokeOpacity="0.7"
      strokeWidth="5"
      strokeLinejoin="round"
      paintOrder="stroke"
    >
      {data.map((tile, k) =>
        tile.map(([x1, y1, x2, y2, text], i) => (
          <text
            key={`${k}-${i}`}
            textLength={Math.hypot(x2 - x1, y2 - y1)}
            transform={`translate(${x1 + k * TILE} ${y1}) rotate(${(Math.atan2(y2 - y1, x2 - x1) * 180) / Math.PI})`}
          >
            {text}
          </text>
        )),
      )}
    </g>
  );
}

function PinGlyph({ kind }: { kind: Kind }) {
  switch (kind) {
    case "bag":
      return <path d="M-9-3H9L10 9H-10ZM-5-3V-6A5 5 0 0 1 5-6V-3H2V-6A2 2 0 0 0-2-6V-3Z" />;
    case "film":
      return <path d="M-10-10H-6V-7H-4V-10H4V-7H6V-10H10V10H6V7H4V10H-4V7H-6V10H-10Z" />;
    case "bed":
      return <path d="M-11-7H-8V2H-1V-4H8Q11-3 11 1V8H8V5H-8V8H-11ZM-5-4A3 3 0 1 1-5 2A3 3 0 1 1-5-4Z" />;
    case "train":
      return <path fillRule="evenodd" d="M-8-9Q0-12 8-9V5L5 8L8 11H-8L-5 8L-8 5ZM-5-6V0H-1V-6ZM1-6V0H5V-6Z" />;
    case "mask":
      return <path d="M-1-10L10-8V2Q6 8 2 4V-2L-1-4ZM-10-3L-2-1V4L2 7Q-2 13-8 8Z" />;
    case "camera":
      return <path fillRule="evenodd" d="M-10-7H-4V-9H3V-6H10V8H-10ZM3-3A5 5 0 1 0 3 6A5 5 0 1 0 3-3Z" />;
    case "bridge":
      return <path d="M-10-9H-7V-2H7V-9H10V9H7V4H3V9H0V4H-3V9H-7V4H-10ZM-4-8H-2V-3H-4ZM2-8H4V-3H2Z" />;
    case "ring":
      return <circle r="11" />;
    case "tower":
      return <path d="M-2-12H2L4 5H9V9H-9V5H-4Z" />;
    case "church":
      return <path d="M-10 10V-2L-7-6L-4-2V10ZM-3 10V-8L0-12L3-8V10ZM4 10V-2L7-6L10-2V10Z" />;
    case "music":
      return <path d="M-3-10L8-7V-3L0-5V6A4 4 0 1 1-3 3Z" />;
    case "school":
      return <path fillRule="evenodd" d="M-12-4L0-10L12-4V6H9V-1L6 1V7Q0 11-6 7V1ZM-6-3L0 0L6-3L0-5Z" />;
    case "star":
      return <path d="M0-12L4-6H10L7 0L10 6H4L0 12L-4 6H-10L-7 0L-10-6H-4Z" />;
    default:
      return <path fillRule="evenodd" d="M-11-4L0-11L11-4V8H-11ZM-7-3V5H7V-3ZM-4-1H4V3H-4Z" />;
  }
}

function Shapes({ data, fill }: { data: string[][]; fill: string }) {
  return (
    <g fill={fill}>
      {data.map((tile, k) => (
        <g key={k} transform={`translate(${k * TILE} 0)`}>
          {tile.map((d, i) => (
            <path key={i} d={d} />
          ))}
        </g>
      ))}
    </g>
  );
}

function ParisMap() {
  return (
    <svg viewBox="0 33 5760 1494" width="1920" height="498" fontFamily="Roboto, sans-serif" className="block">
      <rect y="27" width="5760" height="1503" fill="#ececec" />
      <Shapes data={warm} fill="#f7ede2" />
      <Shapes data={green} fill="#dff1ce" />
      <Shapes data={water} fill="#d0e1fd" />
      <g fill="#f5f1ec">
        <path d="M2880 1000L3070 960L3075 1180L2960 1190L2880 1120ZM3150 1020L3240 1050L3210 1150L3150 1140Z" />
        <path d="M2140 360L2260 345L2270 400L2180 430ZM2140 790H2200V820H2140ZM4320 240H4460V330H4320ZM4330 380L4370 360L4390 520L4350 540Z" />
        <circle cx="5140" cy="1425" r="34" fill="#ececec" />
      </g>
      {/* ring road on the western edge */}
      <g fill="none">
        <path d="M640 33L440 430L390 520L250 860L120 1130L0 1330" stroke="#fdf0cc" strokeWidth="32" />
        <path d="M340 440L220 610L90 800L0 930" stroke="#fbe3bf" strokeWidth="40" />
        <path d="M330 430L210 600L80 790L0 915M345 450L230 620L100 815L0 950" stroke="#f2c79c" strokeWidth="4" />
        <path d="M300 420Q380 520 400 640" stroke="#fdf0cc" strokeWidth="18" />
      </g>
      <g fill="none" stroke="#ffffff" strokeLinejoin="round">
        {roads.map((tile, k) => (
          <g key={k} transform={`translate(${k * TILE} 0)`}>
            {tile.map(([w, d], i) => (
              <path key={i} d={d} strokeWidth={w} strokeOpacity={w < 8 ? 0.8 : 1} />
            ))}
          </g>
        ))}
        <circle cx="1801" cy="265" r="105" strokeWidth="6" strokeOpacity="0.7" />
        <circle cx="1801" cy="265" r="160" strokeWidth="6" strokeOpacity="0.7" />
      </g>
      <circle cx="1801" cy="265" r="46" fill="#e6e6e6" stroke="#fff" strokeWidth="16" />
      <circle cx="1250" cy="1408" r="42" fill="#e6e6e6" stroke="#fff" strokeWidth="14" />
      <circle cx="2696" cy="1070" r="18" fill="#fff" />
      <circle cx="980" cy="1148" r="18" fill="#fff" />
      <circle cx="5028" cy="1118" r="22" fill="#fff" />
      <circle cx="5028" cy="1118" r="9" fill="#e8e8e8" />
      <circle cx="5422" cy="145" r="11" fill="#ececec" stroke="#fff" strokeWidth="6" />
      <g fill="none" stroke="#d6d6d6" strokeWidth="2.5">
        {thin.map((tile, k) => (
          <g key={k} transform={`translate(${k * TILE} 0)`}>
            <path d={tile[0]} />
            <path d={tile[1]} stroke={k > 1 ? "#cbe3b6" : "#d4d0c8"} />
          </g>
        ))}
      </g>
      <g fill="none" stroke="#cdcfdd" strokeWidth="5">
        {arrows.map((tile, k) =>
          tile.map(([x, y, a], i) => <path key={`${k}-${i}`} transform={`translate(${x + k * TILE} ${y}) rotate(${a})`} d="M-18 0H14M6-7L17 0L6 7" />),
        )}
      </g>
      <rect x="0" y="202" width="34" height="32" fill="#e79a9f" />
      <text x="2" y="227" fontSize="23" fontWeight="700" fill="#fff">35</text>

      <Lines data={streets} size={36} color="#a6a6a6" />
      <Lines data={[[[30, 1292, 264, 888, "Boulevards des Maréchaux"], [555, 62, 600, 30, "trip"], [0, 955, 22, 905, "ue"]]]} size={36} color="#ab957c" />
      <Lines data={metroText} size={33} color="#8fc3de" />
      <Lines data={poiText} size={43} color="#b0a097" />
      <Lines data={stationText} size={42} color="#a8978c" weight={500} />
      <Lines data={shopText} size={42} color="#9794d6" weight={500} />
      <Lines data={shopTextThin} size={43} color="#9794d6" />
      <Lines data={districtText} size={48} color="#bdb4a9" weight={500} />
      <Lines data={[[], [[869, 1368, 961, 1368, "Seine"]], [[924, 1512, 1010, 1545, "Seine"]]]} size={38} color="#8fb3e6" italic />
      <Lines data={[[], [], [[1096, 1352, 1284, 1352, "Jardin des"], [1115, 1395, 1267, 1395, "Tuileries"]]]} size={41} color="#9cbf8e" italic />
      <Lines data={[[], [], [[4, 789, 347, 789, "Franklin D. Roosevelt"]]]} size={36} color="#b9605f" weight={700} />

      {metroPins.map((tile, k) =>
        tile.map(([x, y], i) => (
          <g key={`${k}-${i}`} transform={`translate(${x + k * TILE} ${y})`}>
            <circle r="16.5" fill="#fff" stroke="#a19bcb" strokeWidth="3.5" />
            <text y="8.5" textAnchor="middle" fontSize="24" fontWeight="900" fill="#8078bd">M</text>
          </g>
        )),
      )}
      {rerPins.map((tile, k) =>
        tile.map(([x, y], i) => (
          <g key={`${k}-${i}`} transform={`translate(${x + k * TILE} ${y})`}>
            <circle r="16.5" fill="#fff" stroke="#a19bcb" strokeWidth="3.5" />
            <text y="4.5" textAnchor="middle" fontSize="12" fontWeight="900" fill="#8078bd">RER</text>
          </g>
        )),
      )}
      {pins.map((tile, k) =>
        tile.map(([x, y, kind], i) => (
          <g key={`${k}-${i}`} transform={`translate(${x + k * TILE} ${y})`}>
            <circle r="19" fill={kind === "bag" || kind === "film" ? "#b3afe4" : "#bfb2a9"} stroke="#fff" strokeWidth="2" />
            <g fill="#fff">
              <PinGlyph kind={kind} />
            </g>
          </g>
        )),
      )}
      <path d="M2856 768C2852 722 2824 718 2824 688A32 32 0 0 1 2888 688C2888 718 2860 722 2856 768Z" fill="#f79a93" stroke="#dd7f79" strokeWidth="3" />
      <circle cx="2856" cy="690" r="11" fill="#9d524e" />
      <text x="2805" y="1463" fontSize="45" fontWeight="500" textLength="146" stroke="#fff" strokeWidth="5" paintOrder="stroke">
        <tspan fill="#9bbcf3">G</tspan>
        <tspan fill="#ef9a93">o</tspan>
        <tspan fill="#f7d98c">o</tspan>
        <tspan fill="#9bbcf3">g</tspan>
        <tspan fill="#98cfa5">l</tspan>
        <tspan fill="#ef9a93">e</tspan>
      </text>
    </svg>
  );
}

const STAR = "M12 1L15.2 9H23.5L16.8 14L19.3 22.5L12 17.4L4.7 22.5L7.2 14L.5 9H8.8Z";

function PlaceCard() {
  return (
    <div className="absolute left-[10px] top-[10px] flex h-[109px] w-[376px] justify-between bg-white pl-[12px] font-[Roboto,sans-serif] text-[12px] shadow-sm">
      <div className="pt-[9px]">
        <div className="text-[14px] leading-[18px] tracking-[0.05px] text-[#777]">Franklin D. Roosevelt</div>
        <div className="mt-[5px] leading-[16px] text-[#a8a8a8]">75008 Paris</div>
        <div className="mt-[11px] flex items-center leading-[16px]">
          <span className="text-[14px] font-medium text-[#eaaa80]">3,9</span>
          <span className="ml-[3px] flex">
            {[0, 1, 2, 3, 4].map((i) => (
              <svg key={i} viewBox="0.5 1 23 22" width="11" height="11" fill={i < 4 ? "#eeb388" : "#dcdcdc"}>
                <path d={STAR} />
              </svg>
            ))}
          </span>
          <span className="ml-[11px] text-[#9bb7ea]">78 avis</span>
        </div>
        <div className="mt-[9px] leading-[16px] text-[#9bb7ea]">Agrandir le plan</div>
      </div>
      <div className="flex h-[52px] pt-[11px] text-[#9bb7ea]">
        <div className="flex w-[86px] flex-col items-center border-r border-[#f1f1f1]">
          <svg viewBox="0 0 20 20" width="20" height="20" fill="none" stroke="#a9c1ee" strokeWidth="4.5">
            <path d="M9 20V12Q9 9 12 7L15 4M1.500 3.500L8 9" />
            <path d="M9 1H18.500V10Z" fill="#a9c1ee" stroke="none" />
          </svg>
          <span className="mt-[6px] leading-[14px]">Itinéraires</span>
        </div>
        <div className="flex w-[78px] flex-col items-center">
          <svg viewBox="0 0 24 24" width="22" height="22" fill="#a9c1ee">
            <path d={STAR} />
          </svg>
          <span className="mt-[4px] leading-[14px]">Enregist...</span>
        </div>
      </div>
    </div>
  );
}

const NAV = [
  { label: "Serveur Mutualisé", icon: ICONS.users, wide: true, box: "w-[228px]", track: "tracking-[0.7px]" },
  { label: "Serveur Dédié", icon: ICONS.user, box: "w-[175px]", track: "tracking-[0.7px]" },
  { label: 'Solution "Cloud"', icon: ICONS.cloud, wide: true, box: "w-[211px]", track: "tracking-[0.95px]" },
  { label: "Contact", icon: ICONS.envelope, box: "w-[100px]", track: "tracking-[1.1px]" },
];

const FOOTER = [
  { label: "Accueil", box: "w-[65px] tracking-[0.15px]" },
  { label: "Serveur Mutualisé", box: "w-[164px] tracking-[0.15px]" },
  { label: "Serveur Dédié", box: "w-[125px] tracking-[0.15px]" },
  { label: 'Solution "Cloud"', box: "w-[151px] tracking-[0.4px]" },
  { label: "Contact", box: "w-[71px] tracking-[0.4px]" },
  { label: "Se connecter", box: "w-[118px] tracking-[0.28px]" },
];

function ContactColumn({ icon, children }: { icon: string; children: React.ReactNode }) {
  return (
    <div className="flex-1 px-[25px] text-center">
      <div className="flex h-[62px] justify-center border-b border-dashed border-[#e88d9d] pt-px">
        <Glyph d={icon} size={45} />
      </div>
      <div className="pt-[25px] text-[16px] leading-[28px] text-[#666]">{children}</div>
    </div>
  );
}

export default function App() {
  return (
    <div className="flex h-[1618px] w-[1920px] flex-col overflow-hidden bg-white font-['Open_Sans',sans-serif]">
      <header className="flex h-[250px] items-start justify-between bg-[#fcfcfc] pl-[90px] pr-[107px]">
        <div className="mt-[40px] w-[149px]">
          <div className="w-[170px]">
            <Logo />
          </div>
        </div>
        {NAV.map((n) => (
          <a key={n.label} className={`${n.box} mt-[88px] flex flex-col items-center`}>
            <Glyph d={n.icon} wide={n.wide} size={34} />
            <span className={`${n.track} mt-[5px] whitespace-nowrap text-[23px] font-extrabold leading-[30px] text-[#263f4d]`}>{n.label}</span>
          </a>
        ))}
      </header>

      <div className="flex h-[77px] items-center bg-[#fb8a9b] pl-[100px]">
        <input
          className="w-[600px] bg-transparent font-['Liberation_Sans',sans-serif] text-[24px] tracking-[1.98px] outline-none placeholder:text-[#fdc5cd]"
          placeholder="QUE RECHERCHEZ-VOUS ?"
        />
      </div>

      <main className="h-[467px] px-[121px] pt-[75px]">
        <div className="flex h-[102px] justify-center border-x border-t border-dashed border-[#4d5c66] pt-[31px]">
          <h1 className="whitespace-nowrap text-[30px] font-extrabold leading-[40px] tracking-[1.15px] text-[#263f4d]">Contactez-nous</h1>
        </div>
        <div className="mt-[69px] flex">
          <ContactColumn icon={ICONS.plane}>
            <span className="text-[#555] underline decoration-dotted [-webkit-text-stroke:0.5px_#555]">Mail :</span> <a className="text-[#ee8797]">contact@3wa.fr</a>
          </ContactColumn>
          <ContactColumn icon={ICONS.phone}>
            <span className="text-[#555] underline decoration-dotted [-webkit-text-stroke:0.5px_#555]">Tel :</span> <a className="text-[#ee8797]">+33 1 40 58 19 72</a>
          </ContactColumn>
          <ContactColumn icon={ICONS.envelope}>
            <address className="tracking-[0.33px]">
              <span className="tracking-[0.5px] text-[#555] [-webkit-text-stroke:0.5px_#555]">MindGeek</span>
              <br />
              46, rue René Clair
              <br />
              75018 Paris
            </address>
          </ContactColumn>
        </div>
      </main>

      <section className="relative h-[500px] overflow-hidden border-x border-b border-t-2 border-dashed border-[#a8a8a8] [border-top-color:#c9c9c9] [border-top-style:solid]">
        <div className="-ml-px">
          <ParisMap />
        </div>
        <PlaceCard />
        <div className="absolute bottom-[21px] left-[10px] h-[42px] w-[42px] border-2 border-white bg-[#a9b0aa] shadow">
          <svg viewBox="0 0 38 38" className="h-full w-full" stroke="#a0a8a1" strokeWidth="1" fill="none">
            <path d="M0 6L38 2M0 13L38 9M0 22L20 14L38 18M4 0L8 20M14 0L17 18M26 0L24 16M0 30L18 20L38 26M8 38L24 18M32 8L28 38" />
            <path d="M20 22Q30 16 36 28M18 26L30 36" stroke="#b5bdb6" strokeWidth="2" />
          </svg>
        </div>
        <div className="absolute right-[10px] top-[10px] flex h-[28px] w-[28px] items-end justify-center border-2 border-white bg-[#d0def8]">
          <svg viewBox="0 0 20 20" width="20" height="20" fill="#a3b2e8">
            <circle cx="10" cy="5.5" r="4.5" />
            <path d="M2 20V16Q2 12 6 12H14Q18 12 18 16V20Z" />
          </svg>
        </div>
        <div className="absolute bottom-[24px] right-[10px] flex h-[55px] w-[28px] flex-col items-center rounded-sm bg-white shadow-sm">
          <svg viewBox="0 0 28 55" width="28" height="55" stroke="#b0b0b0" strokeWidth="3" fill="none">
            <path d="M8.500 13.500H19.500M14 8V19M8.500 41.500H19.500" />
            <path d="M4 28H24" stroke="#eeeeee" strokeWidth="1" />
          </svg>
        </div>
        <div className="absolute bottom-0 right-0 flex h-[14px] w-[542px] items-center justify-between whitespace-nowrap bg-white/60 pl-[5px] pr-[6px] font-[Roboto,sans-serif] text-[10px] text-[#9b9b9b]">
          <span>©2017 Google - Données cartographiques ©2017 Google</span>
          <span>Conditions d'utilisation</span>
          <span>Signaler une erreur cartographique</span>
        </div>
      </section>

      <footer className="mt-[8px] flex flex-1 items-start justify-between bg-[#263f4d] pl-[143px] pr-[144px] pt-[68px]">
        {FOOTER.map((f) => (
          <a key={f.label} className={`${f.box} flex justify-center whitespace-nowrap text-[17px] font-extrabold leading-[24px] text-white`}>
            {f.label}
          </a>
        ))}
      </footer>
    </div>
  );
}
